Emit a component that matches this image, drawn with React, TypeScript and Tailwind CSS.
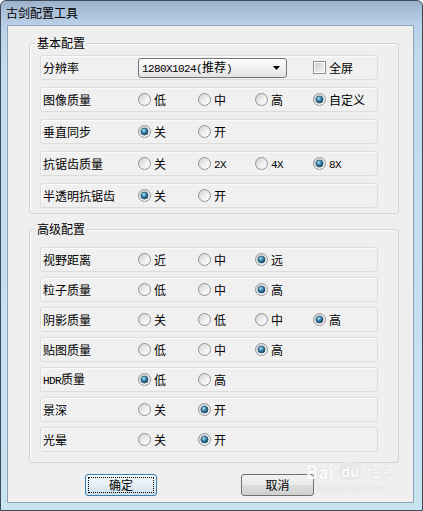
import React from 'react';

type Row = {
  label: string;
  options: string[];
  selected: number;
};

const basicRows: Row[] = [
  { label: '图像质量', options: ['低', '中', '高', '自定义'], selected: 3 },
  { label: '垂直同步', options: ['关', '开'], selected: 0 },
  { label: '抗锯齿质量', options: ['关', '2X', '4X', '8X'], selected: 3 },
  { label: '半透明抗锯齿', options: ['关', '开'], selected: 0 },
];

const advancedRows: Row[] = [
  { label: '视野距离', options: ['近', '中', '远'], selected: 2 },
  { label: '粒子质量', options: ['低', '中', '高'], selected: 2 },
  { label: '阴影质量', options: ['关', '低', '中', '高'], selected: 3 },
  { label: '贴图质量', options: ['低', '中', '高'], selected: 2 },
  { label: 'HDR质量', options: ['低', '高'], selected: 0 },
  { label: '景深', options: ['关', '开'], selected: 1 },
  { label: '光晕', options: ['关', '开'], selected: 1 },
];

// ASCII runs are drawn in a narrow mono face, like the SimSun latin glyphs
function Txt({ text }: { text: string }) {
  const parts = text.match(/[\x20-\x7e]+|[^\x20-\x7e]+/g) || [];
  return (
    <>
      {parts.map((p, i) =>
        /^[\x20-\x7e]+$/.test(p) ? (
          <span key={i} className="font-['Liberation_Mono',monospace] text-[11px] tracking-[-0.6px]">
            {p}
          </span>
        ) : (
          <span key={i}>{p}</span>
        )
      )}
    </>
  );
}

function Radio({ checked }: { checked: boolean }) {
  return (
    <svg width="13" height="13" viewBox="0 0 13 13" className="shrink-0">
      <circle cx="6.5" cy="6.5" r="6" fill="url(#radioBg)" stroke="#929292" strokeWidth="1" />
      {checked && (
        <circle cx="6.5" cy="6.5" r="3.6" fill="url(#radioDot)" stroke="#1c4760" strokeWidth="0.6" />
      )}
    </svg>
  );
}

function Checkbox() {
  return (
    <span className="flex h-[13px] w-[13px] shrink-0 items-center justify-center border border-[#8f8f8f] bg-white">
      <span className="h-[9px] w-[9px] bg-[linear-gradient(135deg,#cfcfcf,#f4f4f4)]" />
    </span>
  );
}

function RowBox({ children }: { children: React.ReactNode }) {
  return (
    <div className="grid h-[25px] w-[338px] grid-cols-[95px_60px_57px_58px_1fr] items-center rounded-[3px] border border-[#dcdcdc] bg-[#f1f0f0] pl-[2px] shadow-[inset_1px_1px_0_#fbfbfb]">
      {children}
    </div>
  );
}

function OptionRow({ row }: { row: Row }) {
  return (
    <RowBox>
      <span className="whitespace-nowrap">
        <Txt text={row.label} />
      </span>
      {row.options.map((opt, i) => (
        <span key={opt} className="flex items-center gap-[3px]">
          <Radio checked={i === row.selected} />
          <span className="whitespace-nowrap">
            <Txt text={opt} />
          </span>
        </span>
      ))}
    </RowBox>
  );
}

function Group({
  title,
  children,
  className,
}: {
  title: string;
  children: React.ReactNode;
  className: string;
}) {
  return (
    <div
      className={`relative ml-[21px] w-[370px] rounded-[3px] border border-[#d3d3d3] pl-[10px] shadow-[inset_1px_1px_0_#fcfcfc] ${className}`}
    >
      <span className="absolute left-[5px] top-[-10px] bg-[#f0efef] px-[2px] leading-[17px]">{title}</span>
      {children}
    </div>
  );
}

export default function App() {
  return (
    <div className="relative h-[511px] w-[423px] overflow-hidden rounded-t-[6px] border border-[#3d4b59] bg-[linear-gradient(180deg,#9db3cc_0px,#bad0e8_23px,#c4daee_60px,#c7e4f1_100%)] font-['Noto_Sans_CJK_SC','Liberation_Sans',sans-serif] text-[12px] text-black">
      <svg width="0" height="0" className="absolute">
        <defs>
          <linearGradient id="radioBg" x1="0" y1="0" x2="1" y2="1">
            <stop offset="0" stopColor="#cfcfcf" />
            <stop offset="0.6" stopColor="#f2f2f2" />
            <stop offset="1" stopColor="#ffffff" />
          </linearGradient>
          <radialGradient id="radioDot" cx="0.4" cy="0.35" r="0.7">
            <stop offset="0" stopColor="#b6e3f5" />
            <stop offset="0.45" stopColor="#3b86ad" />
            <stop offset="1" stopColor="#0e3a52" />
          </radialGradient>
        </defs>
      </svg>

      {/* Title bar */}
      <div className="flex h-[24px] items-center pl-[5px] text-[12px]">古剑配置工具</div>

      {/* Client area */}
      <div className="ml-[6px] h-[478px] w-[407px] border border-[#8fa3b8] bg-[#f0efef] pt-[17px]">
        <Group title="基本配置" className="h-[171px] pt-[11px]">
          <div className="flex flex-col gap-[7px]">
            <RowBox>
              <span>分辨率</span>
              <div className="col-span-3 flex h-[20px] w-[149px] items-center justify-between rounded-[3px] border border-[#767676] bg-[linear-gradient(180deg,#fdfdfd,#f0f0f0_50%,#e3e3e3)] pl-[3px] pr-[6px]">
                <span className="whitespace-nowrap">
                  <Txt text="1280X1024(推荐)" />
                </span>
                <svg width="7" height="4" viewBox="0 0 7 4">
                  <path d="M0 0h7L3.5 4z" fill="#000" />
                </svg>
              </div>
              <span className="flex items-center gap-[3px]">
                <Checkbox />
                <span>全屏</span>
              </span>
            </RowBox>
            {basicRows.map((r) => (
              <OptionRow key={r.label} row={r} />
            ))}
          </div>
        </Group>

        <Group title="高级配置" className="mt-[15px] h-[234px] pt-[17px]">
          <div className="flex flex-col gap-[5px]">
            {advancedRows.map((r) => (
              <OptionRow key={r.label} row={r} />
            ))}
          </div>
        </Group>

        <div className="mt-[11px] flex pl-[77px]">
          <button className="flex h-[22px] w-[72px] items-center justify-center rounded-[3px] border border-[#3c7fb1] bg-[linear-gradient(180deg,#f4f9fc,#e4eef4_50%,#cfdfe8)] p-[2px]">
            <span className="flex h-full w-full items-center justify-center border border-dotted border-black">
              确定
            </span>
          </button>
          <button className="ml-[84px] flex h-[22px] w-[73px] items-center justify-center rounded-[3px] border border-[#707070] bg-[linear-gradient(180deg,#f2f2f2,#ebebeb_50%,#dddddd_51%,#cfcfcf)]">
            取消
          </button>
        </div>
      </div>

      {/* Baidu watermark */}
      <div className="pointer-events-none absolute bottom-[16px] right-[26px] flex flex-col items-center opacity-90">
        <div className="flex items-center gap-[5px] text-[18px] font-bold leading-[22px] text-white [text-shadow:0_0_1px_#b8b8b8]">
          <span>Bai</span>
          <span className="rounded-[6px] bg-[#e9e9e9] px-[2px] text-[14px] leading-[18px] text-white">du</span>
          <span className="text-[15px] font-normal">经验</span>
        </div>
        <span className="mt-[2px] text-[8px] leading-[10px] text-[#e4e4e4]">jingyan.baidu.com</span>
      </div>
    </div>
  );
}
